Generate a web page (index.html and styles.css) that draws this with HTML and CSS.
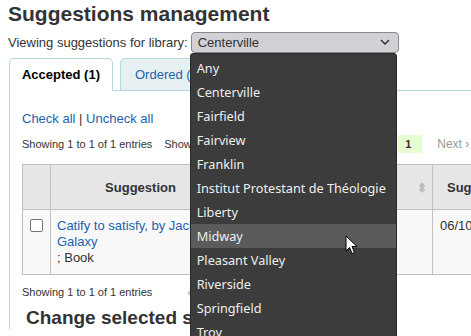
FILE: index.html
```html
<!DOCTYPE html>
<html lang="en">

<head>
	<meta charset="UTF-8">
	<title>Suggestions management</title>
	<link rel="stylesheet" href="styles.css">
</head>

<body>
	<h1>Suggestions management</h1>
	<div class="library">
		<label>Viewing suggestions for library:</label>
		<div class="picker">
			<div class="select">
				<span>Centerville</span>
				<svg class="chev" width="10" height="6" viewBox="0 0 10 6"><path d="M1 1 L5 5 L9 1" fill="none" stroke="#333" stroke-width="1.5"/></svg>
			</div>
			<ul class="options">
				<li>Any</li>
				<li>Centerville</li>
				<li>Fairfield</li>
				<li>Fairview</li>
				<li>Franklin</li>
				<li>Institut Protestant de Théologie</li>
				<li>Liberty</li>
				<li class="hover">Midway</li>
				<li>Pleasant Valley</li>
				<li>Riverside</li>
				<li>Springfield</li>
				<li>Troy</li>
			</ul>
			<svg class="cursor" width="13" height="20" viewBox="0 0 13 20"><path d="M1 1 L1 16 L4.5 12.5 L7 18.5 L9.5 17.5 L7 11.5 L12 11.5 Z" fill="#fff" stroke="#000" stroke-width="1" stroke-linejoin="round"/></svg>
		</div>
	</div>

	<div class="tabs">
		<div class="tab active">Accepted (1)</div>
		<div class="tab">Ordered (1)</div>
		<div class="tabfill"></div>
	</div>
	<div class="panel">
		<div class="checks"><a href="#">Check all</a> | <a href="#">Uncheck all</a></div>
		<div class="toolbar">
			<span class="info">Showing 1 to 1 of 1 entries</span>
			<span class="length">Show 20 entries</span>
			<span class="pages"><span class="current">1</span><span class="next">Next ›</span></span>
		</div>
		<table>
			<colgroup>
				<col class="c-cb">
				<col class="c-sugg">
				<col class="c-sort">
				<col class="c-date">
			</colgroup>
			<thead>
				<tr>
					<th></th>
					<th>Suggestion</th>
					<th class="sort"><span class="arrows">⬍</span></th>
					<th class="date">Suggested on</th>
				</tr>
			</thead>
			<tbody>
				<tr>
					<td class="cb"><span class="box"></span></td>
					<td><a href="#">Catify to satisfy, by Jackson Galaxy</a><br>; Book</td>
					<td></td>
					<td class="date">06/10/2021</td>
				</tr>
			</tbody>
		</table>
		<div class="toolbar bottom">
			<span class="info">Showing 1 to 1 of 1 entries</span>
			<span class="prev">‹ Previous</span>
		</div>
		<h2>Change selected suggestions</h2>
	</div>
</body>

</html>
```
FILE: styles.css
```css
body {
	margin: 0;
	padding: 0 0 0 8px;
	color: #333;
	background-color: #fff;
	font: 13px 'Liberation Sans', Arial, sans-serif;
	overflow: hidden;
	height: 336px;
}

h1 {
	margin: 0;
	padding-top: 1px;
	font-size: 21px;
	line-height: 26px;
	font-weight: bold;
}

.library {
	display: flex;
	align-items: center;
	margin-top: 5px;
	height: 20px;
}

.library label {
	margin-right: 3px;
}

.picker {
	position: relative;
}

.select {
	display: flex;
	align-items: center;
	justify-content: space-between;
	box-sizing: border-box;
	width: 208px;
	height: 21px;
	padding: 0 8px 0 6px;
	background-color: #d1d1d6;
	border: 1px solid #8a8a8a;
	border-radius: 4px;
}

.options {
	position: absolute;
	left: -1px;
	top: 21px;
	z-index: 5;
	width: 205px;
	margin: 0;
	padding: 2px 0 0;
	list-style: none;
	background-color: #3c3c3c;
	border: 1px solid #2a2a2a;
	border-radius: 3px 3px 0 0;
	font: 12.7px 'Noto Sans', sans-serif;
	color: #eee;
}

.options li {
	height: 24px;
	line-height: 24px;
	padding-left: 6px;
	white-space: nowrap;
}

.options .hover {
	background-color: #5b5b5b;
}

.cursor {
	position: absolute;
	left: 154px;
	top: 203px;
	z-index: 6;
}

.tabs {
	display: flex;
	align-items: flex-end;
	margin-top: 6px;
	height: 32px;
}

.tab {
	box-sizing: border-box;
	height: 32px;
	padding: 0 14px;
	line-height: 32px;
	white-space: nowrap;
	border: 1px solid #b9d8d9;
	border-bottom: 0;
	border-radius: 5px 5px 0 0;
	background-color: #e6f0f2;
	color: #2163ae;
	margin-right: 6px;
	margin-left: 1px;
}

.tab.active {
	width: 104px;
	padding: 0;
	text-align: center;
	background-color: #fff;
	color: #000;
	font-weight: bold;
	height: 33px;
	margin-bottom: -1px;
	position: relative;
	z-index: 1;
}

.tabfill {
	flex: 1;
}

.panel {
	margin-left: 1px;
	border-left: 1px solid #b9d8d9;
	border-top: 1px solid #b9d8d9;
	padding: 19px 0 0 12px;
}

a {
	color: #2163ae;
	text-decoration: none;
}

.checks {
	line-height: 18px;
}

.toolbar {
	display: flex;
	align-items: center;
	margin-top: 7px;
	height: 18px;
	font-size: 11px;
	white-space: nowrap;
}

.toolbar .length {
	flex: none;
	width: 234px;
	margin-left: 12px;
}

.pages {
	flex: none;
}

.current {
	display: inline-block;
	width: 24px;
	line-height: 18px;
	padding-left: 7px;
	box-sizing: border-box;
	background-color: #e6fcd1;
	font-weight: bold;
}

.next {
	margin-left: 15px;
	color: #999;
	font-size: 12px;
}

table {
	margin-top: 11px;
	border-collapse: collapse;
	width: 502px;
	table-layout: fixed;
	background-color: #f8f8f8;
}

.c-cb {
	width: 28px;
}

.c-sugg {
	width: 180px;
}

.c-sort {
	width: 202px;
}

.c-date {
	width: 92px;
}

th,
td {
	border: 1px solid #c0c0c0;
	vertical-align: top;
	white-space: nowrap;
	overflow: hidden;
}

th {
	height: 42px;
	background-color: #e6e6e6;
	vertical-align: middle;
}

th.sort {
	text-align: right;
}

.arrows {
	color: #bbb;
	font-size: 12px;
	padding-right: 4px;
}

th.date {
	text-align: left;
	padding-left: 14px;
}

td {
	height: 42px;
	padding: 8px 6px;
	white-space: normal;
	line-height: 16px;
}

td.cb {
	padding: 9px 0 0 7px;
}

.box {
	display: block;
	width: 11px;
	height: 11px;
	border: 1px solid #767676;
	border-radius: 2px;
	background-color: #fff;
}

td.date {
	padding-left: 7px;
	white-space: nowrap;
}

.toolbar.bottom {
	margin-top: 8px;
}

.prev {
	margin-left: 35px;
	color: #999;
}

h2 {
	margin: 6px 0 0 4px;
	font-size: 19px;
	line-height: 22px;
}
```
